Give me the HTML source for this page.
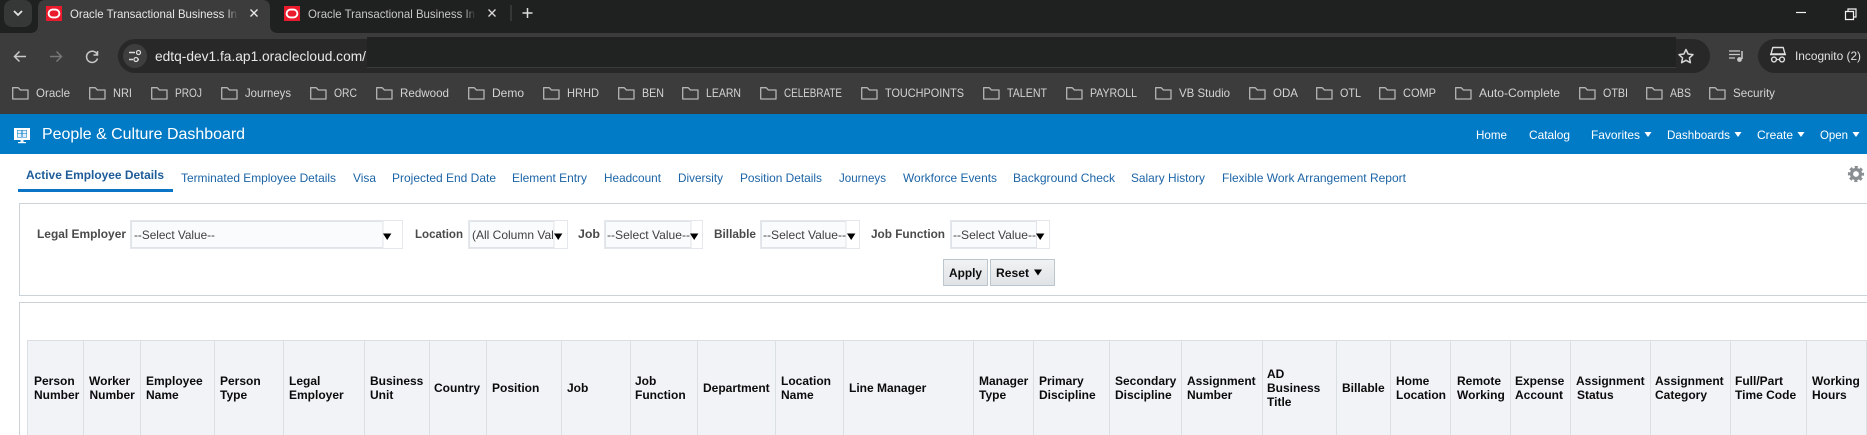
<!DOCTYPE html>
<html lang="en"><head><meta charset="utf-8"><title>People &amp; Culture Dashboard</title>
<style>
html,body{margin:0;padding:0;background:#fff;width:1867px;height:435px;overflow:hidden}
svg{display:block}
text{font-family:"Liberation Sans",Arial,sans-serif;font-size:12px;white-space:pre}
.bm{fill:#d4d4d4}
.tt{fill:#dcdcdc}
.nav{fill:#fff}
.tab{fill:#1c64a6}
.lb{fill:#4a4a4a;font-weight:bold}
.sv{fill:#3f3f3f}
.th{fill:#0b0b0b;font-weight:bold}
.btn{fill:#0d0d0d;font-weight:bold}
</style></head><body>
<svg xmlns="http://www.w3.org/2000/svg" width="1867" height="435" viewBox="0 0 1867 435">
<defs>
<path id="f" d="M.7.7H6.2L8.4 3H16V12H.7Z" fill="none" stroke="#b4b4b4" stroke-width="1.3" stroke-linejoin="round"/>
<g id="fav"><rect width="16" height="15" fill="#ea1b2d"/><rect x="2.6" y="3.6" width="10.8" height="7.8" rx="3.9" fill="none" stroke="#fff" stroke-width="1.9"/></g>
<linearGradient id="btn" x1="0" y1="0" x2="0" y2="1"><stop offset="0" stop-color="#f0f2f3"/><stop offset="1" stop-color="#e0e3e6"/></linearGradient>
<linearGradient id="fa" x1="0" y1="0" x2="1" y2="0"><stop offset="0" stop-color="#3c3c3c" stop-opacity="0"/><stop offset="1" stop-color="#3c3c3c"/></linearGradient>
<linearGradient id="fb" x1="0" y1="0" x2="1" y2="0"><stop offset="0" stop-color="#1f2120" stop-opacity="0"/><stop offset="1" stop-color="#1f2120"/></linearGradient>
<clipPath id="locclip"><rect x="470" y="222" width="84" height="26"/></clipPath>
</defs>

<!-- Browser chrome -->
<rect width="1867" height="33" fill="#1f2120"/>
<rect y="33" width="1867" height="81" fill="#3c3c3c"/>
<rect x="4" y="0" width="28" height="27" rx="8" fill="#363837"/>
<path d="M14 11l4 4 4-4" fill="none" stroke="#e2e2e2" stroke-width="1.8"/>
<path d="M30 33Q38 33 38 25V8Q38 0 46 0H262Q270 0 270 8V25Q270 33 278 33Z" fill="#3c3c3c"/>
<use href="#fav" x="46" y="6"/>
<text x="70" y="18" textLength="167" lengthAdjust="spacingAndGlyphs" fill="#e6e6e6">Oracle Transactional Business In</text>
<rect x="226" y="6" width="12" height="16" fill="url(#fa)"/>
<path d="M250.500 9.500l7 7M257.500 9.500l-7 7" stroke="#e6e6e6" stroke-width="1.400"/>
<use href="#fav" x="284" y="6"/>
<text x="308" y="18" textLength="167" lengthAdjust="spacingAndGlyphs" fill="#c8c8c8">Oracle Transactional Business In</text>
<rect x="464" y="6" width="12" height="16" fill="url(#fb)"/>
<path d="M488.500 9.500l7 7M495.500 9.500l-7 7" stroke="#d8d8d8" stroke-width="1.400"/>
<rect x="510.500" y="5" width="1" height="16" fill="#4b4b4b"/>
<path d="M527.500 8v10M522.500 13h10" stroke="#dcdcdc" stroke-width="1.500"/>
<path d="M1796 12.500h10" stroke="#f2f2f2" stroke-width="1.200"/>
<path d="M1845.500 11.500h8v8h-8zM1848 11.500v-2.500h8v8h-2.500" fill="none" stroke="#f2f2f2" stroke-width="1.200"/>

<!-- Toolbar -->
<path d="M26 56.500H14.500M19.500 51.500l-5 5 5 5" fill="none" stroke="#c9c9c9" stroke-width="1.500"/>
<path d="M50 56.500H61.500M56.500 51.500l5 5-5 5" fill="none" stroke="#777" stroke-width="1.500"/>
<path d="M97 54A5.600 5.600 0 1 0 97.500 58.500M97.500 51v4h-4" fill="none" stroke="#c9c9c9" stroke-width="1.500"/>
<rect x="118" y="39" width="1592" height="34" rx="17" fill="#282828"/>
<circle cx="135" cy="56" r="12" fill="#3e3e3e"/>
<path d="M129 52.500h6M139 59.500h-1M129 59.500h4" stroke="#dcdcdc" stroke-width="1.400"/>
<circle cx="138.500" cy="52.500" r="2" fill="none" stroke="#dcdcdc" stroke-width="1.300"/>
<circle cx="136" cy="59.500" r="2" fill="none" stroke="#dcdcdc" stroke-width="1.300"/>
<text x="155" y="61" style="font-size:14px" textLength="211" lengthAdjust="spacingAndGlyphs" fill="#e8e8e8">edtq-dev1.fa.ap1.oraclecloud.com/</text>
<rect x="367" y="37" width="1309" height="30" fill="#212322"/>
<rect x="367" y="67" width="1309" height="1" fill="#3b3b3b"/>
<path d="M1686 49.500l2.100 4.500 4.900.600-3.600 3.300 1 4.800-4.400-2.400-4.400 2.400 1-4.800-3.600-3.300 4.900-.600z" fill="none" stroke="#d6d6d6" stroke-width="1.500" stroke-linejoin="round"/>
<path d="M1729 51h11M1729 54.500h11M1729 58h6" stroke="#c9c9c9" stroke-width="1.300"/>
<path d="M1742 51v8" stroke="#c9c9c9" stroke-width="1.500"/>
<circle cx="1739.500" cy="59.500" r="2.400" fill="#c9c9c9"/>
<path d="M1775 73a17 17 0 0 1 0-34H1867V73Z" fill="#282828"/>
<path d="M1771 54l1.800-6.500h10.400l1.800 6.500Z" fill="none" stroke="#e0e0e0" stroke-width="1.400" stroke-linejoin="round"/>
<path d="M1770 54.500h16" stroke="#e0e0e0" stroke-width="1.500"/>
<circle cx="1774" cy="59.500" r="2.400" fill="none" stroke="#e0e0e0" stroke-width="1.400"/>
<circle cx="1782" cy="59.500" r="2.400" fill="none" stroke="#e0e0e0" stroke-width="1.400"/>
<path d="M1776.500 59.500h3" stroke="#e0e0e0" stroke-width="1.200"/>
<text x="1795" y="60" textLength="66" lengthAdjust="spacingAndGlyphs" fill="#e0e0e0">Incognito (2)</text>

<!-- Bookmarks -->
<use href="#f" x="12" y="87"/><text class="bm" x="36" y="97" textLength="34" lengthAdjust="spacingAndGlyphs">Oracle</text>
<use href="#f" x="89" y="87"/><text class="bm" x="113" y="97" textLength="19" lengthAdjust="spacingAndGlyphs">NRI</text>
<use href="#f" x="151" y="87"/><text class="bm" x="175" y="97" textLength="27" lengthAdjust="spacingAndGlyphs">PROJ</text>
<use href="#f" x="221" y="87"/><text class="bm" x="245" y="97" textLength="46" lengthAdjust="spacingAndGlyphs">Journeys</text>
<use href="#f" x="310" y="87"/><text class="bm" x="334" y="97" textLength="23" lengthAdjust="spacingAndGlyphs">ORC</text>
<use href="#f" x="376" y="87"/><text class="bm" x="400" y="97" textLength="49" lengthAdjust="spacingAndGlyphs">Redwood</text>
<use href="#f" x="468" y="87"/><text class="bm" x="492" y="97" textLength="32" lengthAdjust="spacingAndGlyphs">Demo</text>
<use href="#f" x="543" y="87"/><text class="bm" x="567" y="97" textLength="32" lengthAdjust="spacingAndGlyphs">HRHD</text>
<use href="#f" x="618" y="87"/><text class="bm" x="642" y="97" textLength="22" lengthAdjust="spacingAndGlyphs">BEN</text>
<use href="#f" x="682" y="87"/><text class="bm" x="706" y="97" textLength="35" lengthAdjust="spacingAndGlyphs">LEARN</text>
<use href="#f" x="760" y="87"/><text class="bm" x="784" y="97" textLength="58" lengthAdjust="spacingAndGlyphs">CELEBRATE</text>
<use href="#f" x="861" y="87"/><text class="bm" x="885" y="97" textLength="79" lengthAdjust="spacingAndGlyphs">TOUCHPOINTS</text>
<use href="#f" x="983" y="87"/><text class="bm" x="1007" y="97" textLength="40" lengthAdjust="spacingAndGlyphs">TALENT</text>
<use href="#f" x="1066" y="87"/><text class="bm" x="1090" y="97" textLength="47" lengthAdjust="spacingAndGlyphs">PAYROLL</text>
<use href="#f" x="1155" y="87"/><text class="bm" x="1179" y="97" textLength="51" lengthAdjust="spacingAndGlyphs">VB Studio</text>
<use href="#f" x="1249" y="87"/><text class="bm" x="1273" y="97" textLength="25" lengthAdjust="spacingAndGlyphs">ODA</text>
<use href="#f" x="1316" y="87"/><text class="bm" x="1340" y="97" textLength="21" lengthAdjust="spacingAndGlyphs">OTL</text>
<use href="#f" x="1379" y="87"/><text class="bm" x="1403" y="97" textLength="33" lengthAdjust="spacingAndGlyphs">COMP</text>
<use href="#f" x="1455" y="87"/><text class="bm" x="1479" y="97" textLength="81" lengthAdjust="spacingAndGlyphs">Auto-Complete</text>
<use href="#f" x="1579" y="87"/><text class="bm" x="1603" y="97" textLength="25" lengthAdjust="spacingAndGlyphs">OTBI</text>
<use href="#f" x="1646" y="87"/><text class="bm" x="1670" y="97" textLength="21" lengthAdjust="spacingAndGlyphs">ABS</text>
<use href="#f" x="1709" y="87"/><text class="bm" x="1733" y="97" textLength="42" lengthAdjust="spacingAndGlyphs">Security</text>

<!-- App header -->
<rect y="114" width="1867" height="40" fill="#027bc7"/>
<rect x="14" y="128" width="16" height="12" fill="#fff"/>
<rect x="17" y="130" width="10" height="7.500" fill="#027bc7"/>
<path d="M17.500 130.500h4v3h-4zM22.500 130.500h4v3h-4zM17.500 134h4v3h-4zM22.500 134h4v3h-4z" fill="#e4f0f9"/>
<rect x="20.500" y="140" width="3" height="2" fill="#e4f0f9"/><rect x="18" y="142" width="8" height="1.200" fill="#fff"/>
<text x="42" y="139" style="font-size:16px" textLength="203" lengthAdjust="spacingAndGlyphs" fill="#fff">People &amp; Culture Dashboard</text>
<text class="nav" x="1476" y="139" textLength="31" lengthAdjust="spacingAndGlyphs">Home</text>
<text class="nav" x="1529" y="139" textLength="41" lengthAdjust="spacingAndGlyphs">Catalog</text>
<text class="nav" x="1591" y="139" textLength="49" lengthAdjust="spacingAndGlyphs">Favorites</text>
<path d="M1644.500 132h7l-3.500 5z" fill="#fff"/>
<text class="nav" x="1667" y="139" textLength="63" lengthAdjust="spacingAndGlyphs">Dashboards</text>
<path d="M1734.500 132h7l-3.500 5z" fill="#fff"/>
<text class="nav" x="1757" y="139" textLength="36" lengthAdjust="spacingAndGlyphs">Create</text>
<path d="M1797.500 132h7l-3.500 5z" fill="#fff"/>
<text class="nav" x="1820" y="139" textLength="28" lengthAdjust="spacingAndGlyphs">Open</text>
<path d="M1852.500 132h7l-3.500 5z" fill="#fff"/>

<!-- Tabs -->
<text x="26" y="179" textLength="138" lengthAdjust="spacingAndGlyphs" font-weight="bold" fill="#1d5c99">Active Employee Details</text>
<rect x="18" y="189" width="155" height="3" fill="#0b74c4"/>
<text class="tab" x="181" y="182" textLength="155" lengthAdjust="spacingAndGlyphs">Terminated Employee Details</text>
<text class="tab" x="353" y="182" textLength="23" lengthAdjust="spacingAndGlyphs">Visa</text>
<text class="tab" x="392" y="182" textLength="104" lengthAdjust="spacingAndGlyphs">Projected End Date</text>
<text class="tab" x="512" y="182" textLength="75" lengthAdjust="spacingAndGlyphs">Element Entry</text>
<text class="tab" x="604" y="182" textLength="57" lengthAdjust="spacingAndGlyphs">Headcount</text>
<text class="tab" x="678" y="182" textLength="45" lengthAdjust="spacingAndGlyphs">Diversity</text>
<text class="tab" x="740" y="182" textLength="82" lengthAdjust="spacingAndGlyphs">Position Details</text>
<text class="tab" x="839" y="182" textLength="47" lengthAdjust="spacingAndGlyphs">Journeys</text>
<text class="tab" x="903" y="182" textLength="94" lengthAdjust="spacingAndGlyphs">Workforce Events</text>
<text class="tab" x="1013" y="182" textLength="102" lengthAdjust="spacingAndGlyphs">Background Check</text>
<text class="tab" x="1131" y="182" textLength="74" lengthAdjust="spacingAndGlyphs">Salary History</text>
<text class="tab" x="1222" y="182" textLength="184" lengthAdjust="spacingAndGlyphs">Flexible Work Arrangement Report</text>
<!-- Gear -->
<circle cx="1856" cy="174" r="6.900" fill="none" stroke="#8a8e92" stroke-width="2.400" stroke-dasharray="3.100 2.320" stroke-dashoffset="1.500"/>
<circle cx="1856" cy="174" r="4.500" fill="none" stroke="#8a8e92" stroke-width="3.200"/>

<!-- Filter panel -->
<rect x="19.500" y="203.500" width="1860" height="92" fill="#fff" stroke="#cbd3da"/>
<text class="lb" x="37" y="238" textLength="89" lengthAdjust="spacingAndGlyphs">Legal Employer</text>
<rect x="130.500" y="220.500" width="272" height="28" fill="#fff" stroke="#e4e8ec"/>
<rect x="131.500" y="221.500" width="251.500" height="26" fill="#fafbfd" stroke="#e0e4e8"/>
<text class="sv" x="134" y="239" textLength="81" lengthAdjust="spacingAndGlyphs">--Select Value--</text>
<path d="M383 233.500h8.400l-4.200 6.500z" fill="#000"/>

<text class="lb" x="415" y="238" textLength="48" lengthAdjust="spacingAndGlyphs">Location</text>
<rect x="468.500" y="220.500" width="99" height="28" fill="#fff" stroke="#e4e8ec"/>
<rect x="469.500" y="221.500" width="84.500" height="26" fill="#fafbfd" stroke="#e0e4e8"/>
<g clip-path="url(#locclip)"><text class="sv" x="472" y="239">(All Column Values)</text></g>
<path d="M554 233.500h8.400l-4.200 6.500z" fill="#000"/>

<text class="lb" x="578" y="238" textLength="22" lengthAdjust="spacingAndGlyphs">Job</text>
<rect x="604.500" y="220.500" width="98" height="28" fill="#fff" stroke="#e4e8ec"/>
<rect x="605.500" y="221.500" width="85.500" height="26" fill="#fafbfd" stroke="#e0e4e8"/>
<text class="sv" x="607" y="239" textLength="83" lengthAdjust="spacingAndGlyphs">--Select Value--</text>
<path d="M690 233.500h8.400l-4.200 6.500z" fill="#000"/>

<text class="lb" x="714" y="238" textLength="42" lengthAdjust="spacingAndGlyphs">Billable</text>
<rect x="760.500" y="220.500" width="99" height="28" fill="#fff" stroke="#e4e8ec"/>
<rect x="761.500" y="221.500" width="84.500" height="26" fill="#fafbfd" stroke="#e0e4e8"/>
<text class="sv" x="763" y="239" textLength="83" lengthAdjust="spacingAndGlyphs">--Select Value--</text>
<path d="M847 233.500h8.400l-4.200 6.500z" fill="#000"/>

<text class="lb" x="871" y="238" textLength="74" lengthAdjust="spacingAndGlyphs">Job Function</text>
<rect x="950.500" y="220.500" width="99" height="28" fill="#fff" stroke="#e4e8ec"/>
<rect x="951.500" y="221.500" width="85" height="26" fill="#fafbfd" stroke="#e0e4e8"/>
<text class="sv" x="953" y="239" textLength="83" lengthAdjust="spacingAndGlyphs">--Select Value--</text>
<path d="M1036 233.500h8.400l-4.200 6.500z" fill="#000"/>

<rect x="943.500" y="259.500" width="44" height="26" fill="url(#btn)" stroke="#bcc6ce"/>
<text class="btn" x="949" y="277" textLength="33" lengthAdjust="spacingAndGlyphs">Apply</text>
<rect x="990.500" y="259.500" width="64" height="26" fill="url(#btn)" stroke="#bcc6ce"/>
<text class="btn" x="996" y="277" textLength="33" lengthAdjust="spacingAndGlyphs">Reset</text>
<path d="M1034 269.500h8l-4 6z" fill="#000"/>

<!-- Report panel -->
<rect x="19.500" y="302.500" width="1860" height="140" fill="#fff" stroke="#cbd3da"/>
<rect x="27" y="340" width="1840" height="95" fill="#f1f3f7"/>
<path d="M27 340.500H1867" stroke="#d9dfe3"/>
<path d="M27.500 340V435M83.500 340V435M140.500 340V435M214.500 340V435M283.500 340V435M364.500 340V435M429.500 340V435M486.500 340V435M561.500 340V435M630.500 340V435M697.500 340V435M775.500 340V435M843.500 340V435M973.500 340V435M1033.500 340V435M1109.500 340V435M1181.500 340V435M1262.500 340V435M1336.500 340V435M1390.500 340V435M1450.500 340V435M1510.500 340V435M1570.500 340V435M1650.500 340V435M1730.500 340V435M1806.500 340V435M1866.500 340V435" stroke="#d9dfe3"/>

<text class="th" x="34" y="385">Person</text><text class="th" x="34" y="399">Number</text>
<text class="th" x="89" y="385">Worker</text><text class="th" x="89.500" y="399">Number</text>
<text class="th" x="146" y="385">Employee</text><text class="th" x="146" y="399">Name</text>
<text class="th" x="220" y="385">Person</text><text class="th" x="220" y="399">Type</text>
<text class="th" x="289" y="385">Legal</text><text class="th" x="289" y="399">Employer</text>
<text class="th" x="370" y="385">Business</text><text class="th" x="370" y="399">Unit</text>
<text class="th" x="434" y="392">Country</text>
<text class="th" x="492" y="392">Position</text>
<text class="th" x="567" y="392">Job</text>
<text class="th" x="635" y="385">Job</text><text class="th" x="635" y="399">Function</text>
<text class="th" x="703" y="392">Department</text>
<text class="th" x="781" y="385">Location</text><text class="th" x="781" y="399">Name</text>
<text class="th" x="849" y="392">Line Manager</text>
<text class="th" x="979" y="385">Manager</text><text class="th" x="979" y="399">Type</text>
<text class="th" x="1039" y="385">Primary</text><text class="th" x="1039" y="399">Discipline</text>
<text class="th" x="1115" y="385">Secondary</text><text class="th" x="1115" y="399">Discipline</text>
<text class="th" x="1187" y="385">Assignment</text><text class="th" x="1187" y="399">Number</text>
<text class="th" x="1267" y="378">AD</text><text class="th" x="1267" y="392">Business</text><text class="th" x="1267" y="406">Title</text>
<text class="th" x="1342" y="392">Billable</text>
<text class="th" x="1396" y="385">Home</text><text class="th" x="1396" y="399">Location</text>
<text class="th" x="1457" y="385">Remote</text><text class="th" x="1457" y="399">Working</text>
<text class="th" x="1515" y="385">Expense</text><text class="th" x="1515" y="399">Account</text>
<text class="th" x="1576" y="385">Assignment</text><text class="th" x="1577" y="399">Status</text>
<text class="th" x="1655" y="385">Assignment</text><text class="th" x="1655" y="399">Category</text>
<text class="th" x="1735" y="385">Full/Part</text><text class="th" x="1735" y="399">Time Code</text>
<text class="th" x="1812" y="385">Working</text><text class="th" x="1812" y="399">Hours</text>
</svg>
</body></html>
